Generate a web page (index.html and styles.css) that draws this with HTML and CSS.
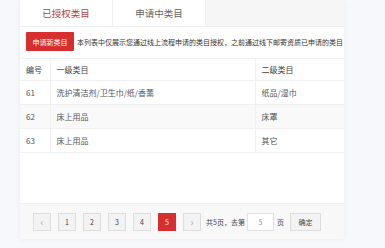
FILE: index.html
```html
<!DOCTYPE html>
<html lang="zh">
<head>
<meta charset="utf-8">
<link rel="stylesheet" href="styles.css">
</head>
<body>
<div class="card">
  <div class="tabs">
    <div class="tab active">已授权类目</div>
    <div class="tab">申请中类目</div>
  </div>
  <div class="toolbar">
    <button class="btn-red">申请新类目</button>
    <span class="note">本列表中仅展示您通过线上流程申请的类目授权，之前通过线下邮寄资质已申请的类目</span>
  </div>
  <table class="grid">
    <thead>
      <tr><th class="c1">编号</th><th class="c2">一级类目</th><th class="c3">二级类目</th></tr>
    </thead>
    <tbody>
      <tr><td>61</td><td>洗护清洁剂/卫生巾/纸/香薰</td><td>纸品/湿巾</td></tr>
      <tr class="hl"><td>62</td><td>床上用品</td><td>床罩</td></tr>
      <tr><td>63</td><td>床上用品</td><td>其它</td></tr>
    </tbody>
  </table>
  <div class="spacer"></div>
  <div class="pager">
    <span class="pg">&lsaquo;</span>
    <span class="pg">1</span>
    <span class="pg">2</span>
    <span class="pg">3</span>
    <span class="pg">4</span>
    <span class="pg cur">5</span>
    <span class="pg">&rsaquo;</span>
    <span class="info">共5页，去第</span>
    <span class="inp">5</span>
    <span class="info">页</span>
    <span class="ok">确定</span>
  </div>
</div>
</body>
</html>
```
FILE: styles.css
```css
* { box-sizing: border-box; }
html, body { margin: 0; padding: 0; }
body {
  background: #f7f8fc;
  font-family: "Noto Sans CJK SC", "Noto Sans", sans-serif;
  color: #444;
  width: 385px;
  height: 248px;
  overflow: hidden;
}
.card {
  margin-left: 20px;
  width: 324px;
  height: 239px;
  background: #fff;
  box-shadow: 0 0 6px rgba(0,0,0,0.06);
  display: flex;
  flex-direction: column;
  overflow: hidden;
}
.tabs {
  display: flex;
  height: 27px;
  background: #f6f6f6;
  border-bottom: 1px solid #eee;
}
.tab {
  width: 93px;
  background: #fff;
  display: flex;
  align-items: center;
  justify-content: center;
  font-size: 9.5px;
  color: #666;
  border-right: 1px solid #f1f1f1;
}
.tab.active { color: #b8433e; }
.toolbar {
  display: flex;
  align-items: center;
  padding: 5px 6px 0;
  height: 24px;
  white-space: nowrap;
}
.btn-red {
  flex: none;
  width: 48px;
  height: 19px;
  border: 0;
  border-radius: 1px;
  background: #d72f2f;
  color: #fff;
  font-family: inherit;
  font-size: 7px;
  padding: 0;
}
.note {
  margin-left: 3px;
  font-size: 7px;
  color: #333;
}
.grid {
  margin-top: 7px;
  width: 100%;
  border-collapse: collapse;
  font-size: 8px;
  color: #555;
}
.grid th, .grid td {
  text-align: left;
  font-weight: normal;
  padding: 0 0 0 6px;
  border-bottom: 1px solid #f0f0f0;
  border-right: 1px solid #f0f0f0;
}
.grid th:last-child, .grid td:last-child { border-right: 0; }
.grid th { height: 22px; color: #444; border-top: 1px solid #f2f2f2; }
.grid td { height: 24px; }
.grid .c1 { width: 30px; }
.grid .c2 { width: 205px; }
.grid tr.hl td { background: #f9f9f9; }
.spacer { flex: 1; }
.pager {
  height: 36px;
  background: #f8f8f8;
  border-top: 1px solid #eee;
  display: flex;
  align-items: center;
  padding: 0 0 0 13px;
  font-size: 7px;
  color: #555;
}
.pg {
  width: 18px;
  height: 18px;
  margin-right: 7px;
  border: 1px solid #ddd;
  background: #f3f3f3;
  display: flex;
  align-items: center;
  justify-content: center;
  color: #444;
}
.pg:first-child, .pg:nth-child(7) { color: #aaa; font-size: 10px; }
.pg.cur { background: #d72f2f; border-color: #d72f2f; color: #fff; }
.pg:nth-child(7) { margin-right: 5px; }
.info { color: #444; }
.inp {
  width: 27px;
  height: 18px;
  margin: 0 3px 0 2px;
  background: #fff;
  border: 1px solid #e2e2e2;
  display: flex;
  align-items: center;
  justify-content: center;
  color: #999;
}
.ok {
  margin-left: 6px;
  width: 31px;
  height: 18px;
  border: 1px solid #ddd;
  background: #f3f3f3;
  display: flex;
  align-items: center;
  justify-content: center;
  color: #444;
}
```
